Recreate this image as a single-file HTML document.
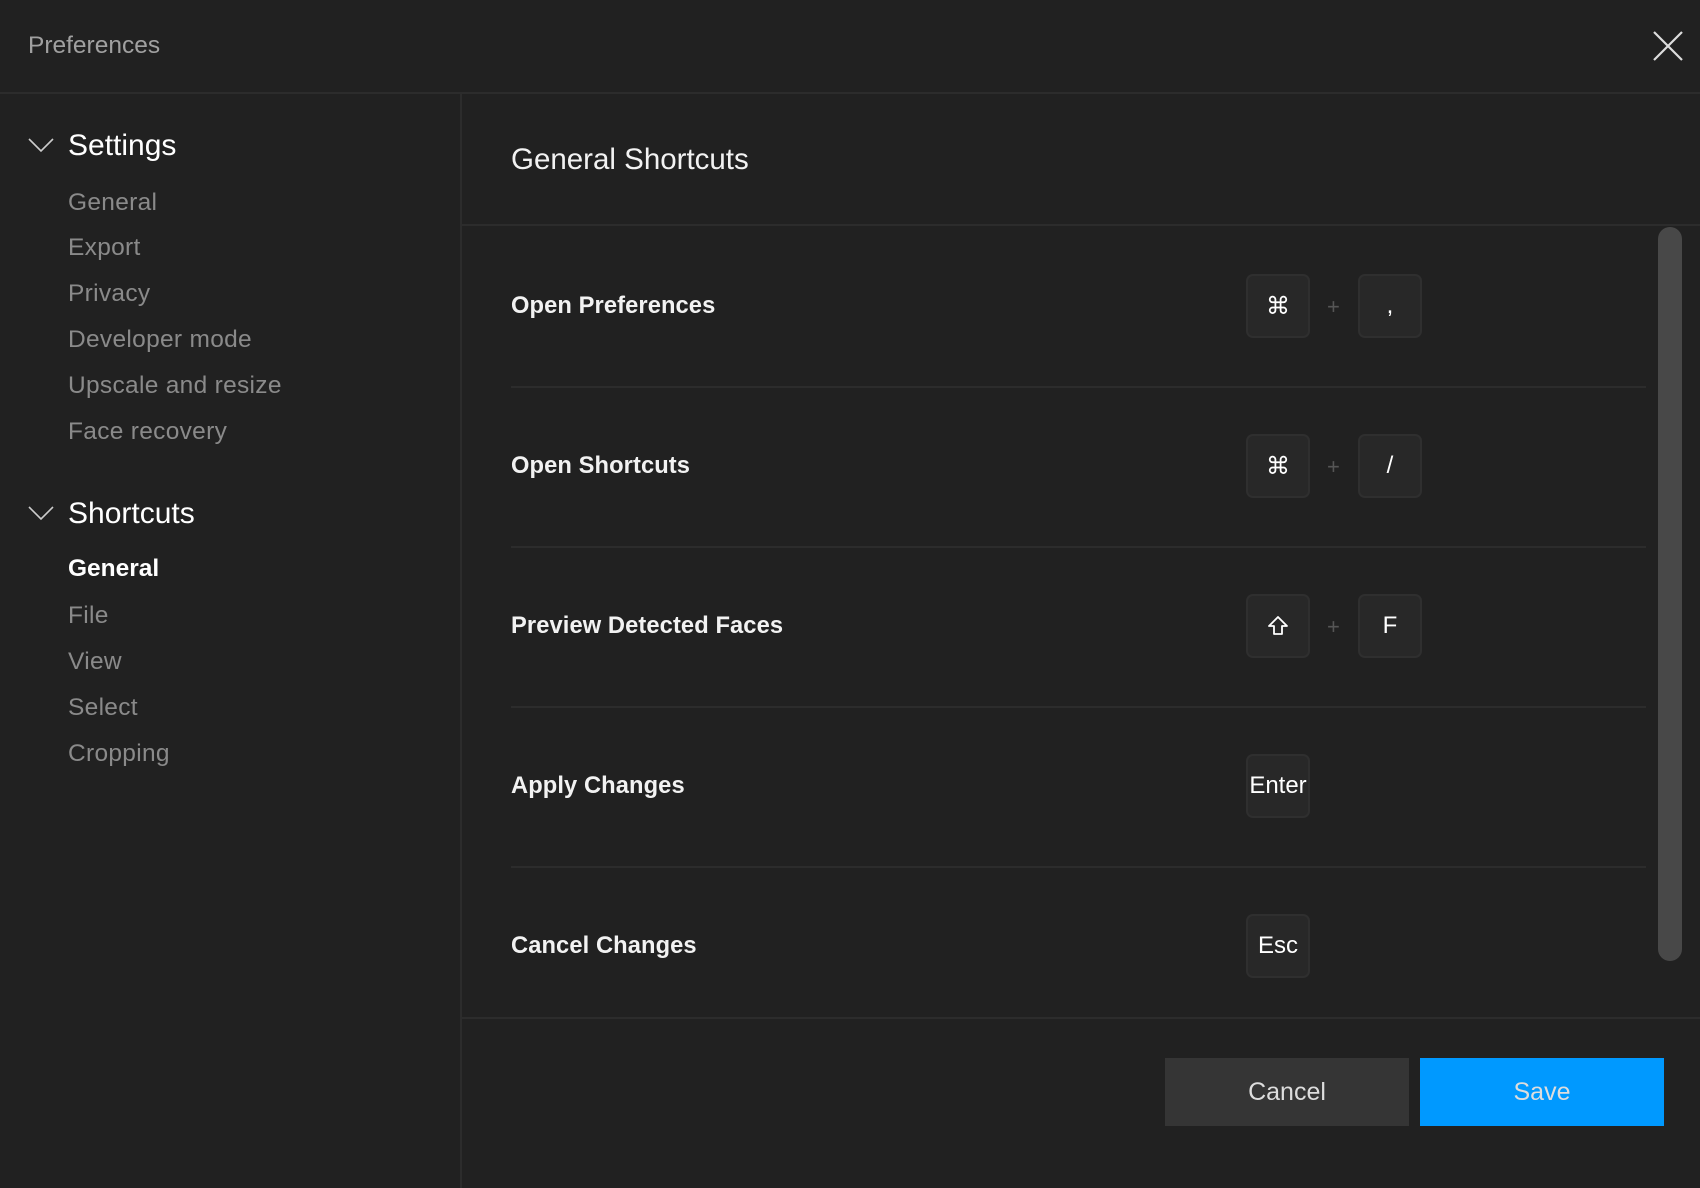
<!DOCTYPE html>
<html><head><meta charset="utf-8"><style>
*{margin:0;padding:0;box-sizing:border-box}
body{width:1700px;height:1188px;background:#212121;font-family:"Liberation Sans",sans-serif;position:relative;overflow:hidden;color:#fff}
.a{position:absolute;white-space:nowrap}
.hdr{left:28px;top:32px;font-size:24.5px;color:#a0a0a0}
.line{position:absolute;background:#2c2c2c}
.sec{font-size:30px;color:#fff;left:68px}
.it{font-size:24.5px;color:#8a8a8a;left:68px;line-height:30px;letter-spacing:0.3px}
.lbl{font-size:23.7px;font-weight:bold;color:#f2f2f2;left:511px;line-height:30px;letter-spacing:0.1px}
.key{position:absolute;width:64px;height:64px;background:#282828;border:2px solid #2f2f2f;border-radius:7px;color:#fff;font-size:24px;display:flex;align-items:center;justify-content:center}
.plus{position:absolute;color:#555;font-size:22px}
.btn{position:absolute;top:1058px;height:68px;width:244px;display:flex;align-items:center;justify-content:center;font-size:25px;color:#ddd}
</style></head><body>
<div class="a hdr">Preferences</div>
<svg class="a" style="left:1652px;top:30px" width="32" height="32" viewBox="0 0 32 32"><path d="M2 2L30 30M30 2L2 30" stroke="#ddd" stroke-width="2.2" fill="none"/></svg>
<div class="line" style="left:0;top:92px;width:1700px;height:2px"></div>
<div class="line" style="left:460px;top:94px;width:2px;height:1094px"></div>
<div class="line" style="left:462px;top:224px;width:1238px;height:2px"></div>
<div class="line" style="left:462px;top:1017px;width:1238px;height:2px"></div>

<svg class="a" style="left:28px;top:137px" width="26" height="16" viewBox="0 0 26 16"><path d="M1 2L13 14L25 2" stroke="#ccc" stroke-width="1.6" fill="none"/></svg>
<div class="a sec" style="top:129px">Settings</div>
<div class="a it" style="top:188px">General</div>
<div class="a it" style="top:233px">Export</div>
<div class="a it" style="top:279px">Privacy</div>
<div class="a it" style="top:325px">Developer mode</div>
<div class="a it" style="top:371px">Upscale and resize</div>
<div class="a it" style="top:417px">Face recovery</div>
<svg class="a" style="left:28px;top:505px" width="26" height="16" viewBox="0 0 26 16"><path d="M1 2L13 14L25 2" stroke="#ccc" stroke-width="1.6" fill="none"/></svg>
<div class="a sec" style="top:497px">Shortcuts</div>
<div class="a it" style="top:554px;color:#fff;font-weight:bold;letter-spacing:0">General</div>
<div class="a it" style="top:601px">File</div>
<div class="a it" style="top:647px">View</div>
<div class="a it" style="top:693px">Select</div>
<div class="a it" style="top:739px">Cropping</div>

<div class="a" style="left:511px;top:143px;font-size:29.5px;color:#f2f2f2">General Shortcuts</div>

<div class="a lbl" style="top:291px">Open Preferences</div>
<div class="key" style="left:1246px;top:274px">⌘</div><div class="plus" style="left:1327px;top:294px">+</div><div class="key" style="left:1358px;top:274px">,</div>
<div class="line" style="left:511px;top:386px;width:1135px;height:2px"></div>

<div class="a lbl" style="top:451px">Open Shortcuts</div>
<div class="key" style="left:1246px;top:434px">⌘</div><div class="plus" style="left:1327px;top:454px">+</div><div class="key" style="left:1358px;top:434px">/</div>
<div class="line" style="left:511px;top:546px;width:1135px;height:2px"></div>

<div class="a lbl" style="top:611px">Preview Detected Faces</div>
<div class="key" style="left:1246px;top:594px"><svg width="22" height="22" viewBox="0 0 22 22"><path d="M11 2L2 11H7V19H15V11H20Z" stroke="#fff" stroke-width="1.8" fill="none" stroke-linejoin="round"/></svg></div><div class="plus" style="left:1327px;top:614px">+</div><div class="key" style="left:1358px;top:594px">F</div>
<div class="line" style="left:511px;top:706px;width:1135px;height:2px"></div>

<div class="a lbl" style="top:771px">Apply Changes</div>
<div class="key" style="left:1246px;top:754px">Enter</div>
<div class="line" style="left:511px;top:866px;width:1135px;height:2px"></div>

<div class="a lbl" style="top:931px">Cancel Changes</div>
<div class="key" style="left:1246px;top:914px">Esc</div>

<div class="a" style="left:1658px;top:227px;width:24px;height:734px;background:#484848;border-radius:12px"></div>

<div class="btn" style="left:1165px;background:#353535">Cancel</div>
<div class="btn" style="left:1420px;background:#0099ff">Save</div>
</body></html>
